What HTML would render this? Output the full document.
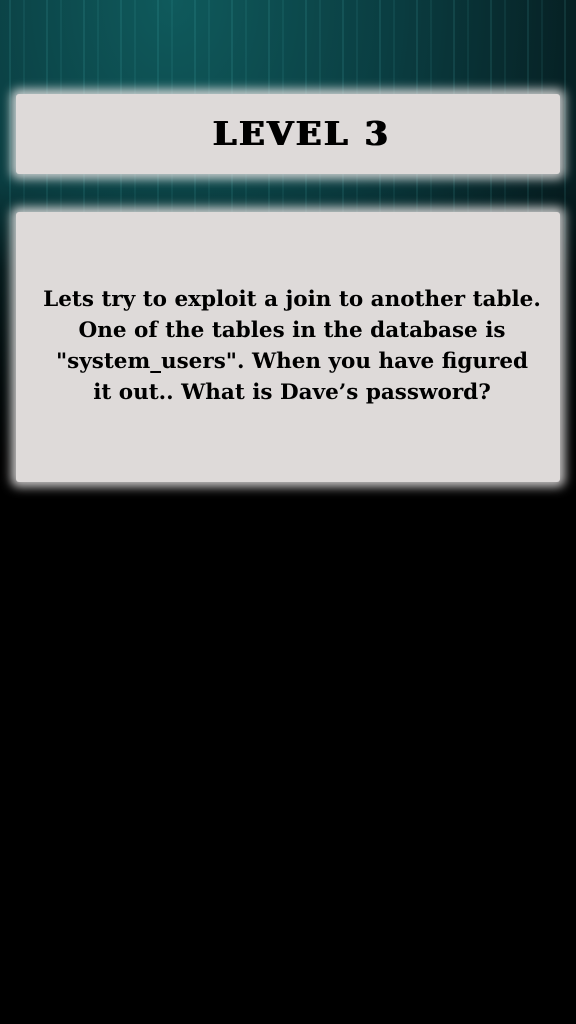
<!DOCTYPE html>
<html><head><meta charset="utf-8"><style>
html,body{margin:0;padding:0;width:576px;height:1024px;overflow:hidden;background:#000;}
.bg{position:absolute;left:0;top:0;width:576px;height:540px;
background:
linear-gradient(to bottom,rgba(0,0,0,0) 0px,rgba(0,0,0,0) 180px,rgba(0,0,0,.55) 270px,#000 470px),
repeating-linear-gradient(90deg,rgba(80,200,200,0) 0px,rgba(80,200,200,0) 9px,rgba(90,210,210,.22) 10px,rgba(80,200,200,0) 11px,rgba(80,200,200,0) 23px,rgba(90,210,210,.15) 24px,rgba(80,200,200,0) 25px,rgba(0,0,0,0) 37px),
radial-gradient(ellipse at 30% 0%,#0f5a5c 0%,#0a3c40 40%,#05181b 80%);}
.panel{position:absolute;left:16px;width:544px;background:#dedad9;box-shadow:0 0 10px 5px rgba(230,228,228,.85);border-radius:3px;}
.p1{top:94px;height:80px;}
.p2{top:212px;height:270px;}
.t{position:absolute;left:0;width:576px;text-align:center;color:#000;}
.title{top:114px;font:900 33px/40px "DejaVu Serif","Liberation Serif",serif;letter-spacing:3px;padding-left:28px;box-sizing:border-box;text-shadow:1px 0 0 #000,-1px 0 0 #000;}
.body{top:284px;font:bold 21.5px/31px "DejaVu Serif","Liberation Serif",serif;padding-left:8px;box-sizing:border-box;letter-spacing:0px;}
</style></head><body>
<div class="bg"></div>
<div class="panel p1"></div>
<div class="panel p2"></div>
<div class="t title">LEVEL 3</div>
<div class="t body">Lets try to exploit a join to another table.<br>One of the tables in the database is<br>"system_users". When you have figured<br>it out.. What is Dave’s password?</div>
</body></html>
